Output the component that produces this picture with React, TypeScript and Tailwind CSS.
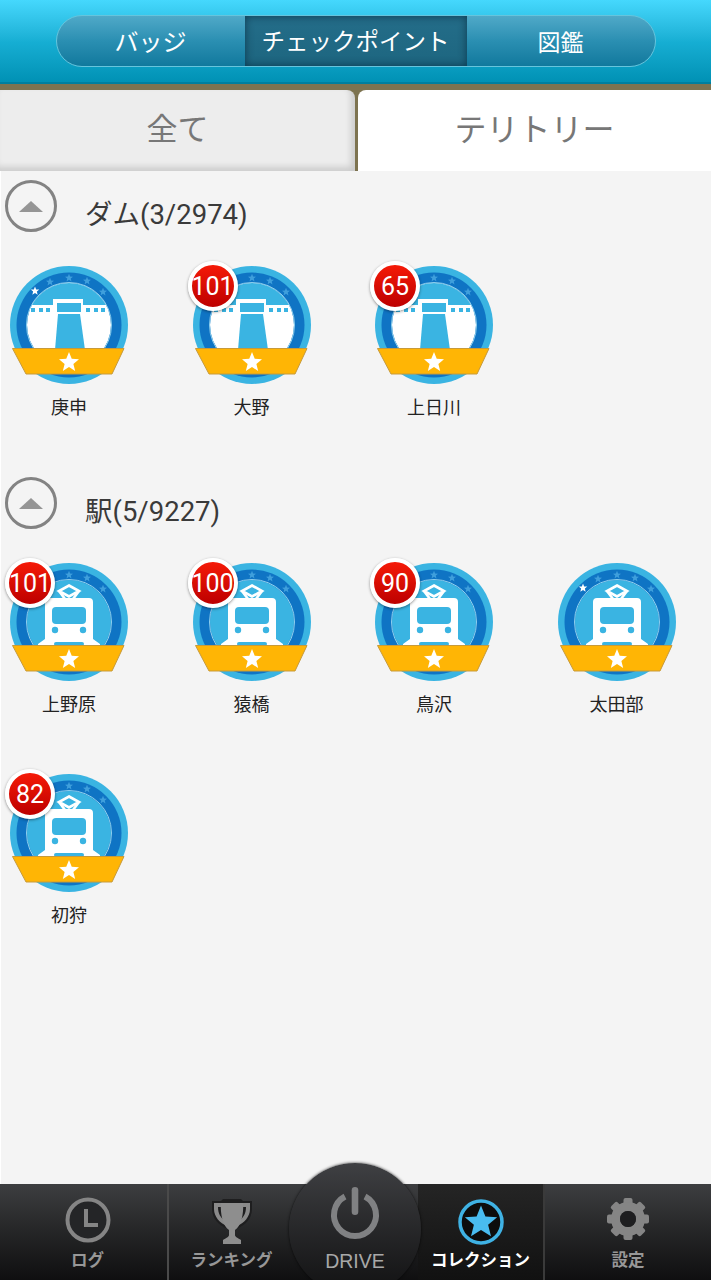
const JP = "font-['Roboto','Noto_Sans_CJK_JP',sans-serif]";

const SECTIONS = [
  {
    title: "ダム(3/2974)",
    kind: "dam",
    items: [
      { name: "庚申" },
      { name: "大野", count: 101 },
      { name: "上日川", count: 65 },
    ],
  },
  {
    title: "駅(5/9227)",
    kind: "train",
    items: [
      { name: "上野原", count: 101 },
      { name: "猿橋", count: 100 },
      { name: "鳥沢", count: 90 },
      { name: "太田部" },
      { name: "初狩", count: 82 },
    ],
  },
];

function starPoints(cx: number, cy: number, r: number) {
  const pts: string[] = [];
  for (let i = 0; i < 10; i++) {
    const rad = i % 2 === 0 ? r : r * 0.44;
    const a = (Math.PI / 5) * i - Math.PI / 2;
    pts.push(`${(cx + rad * Math.cos(a)).toFixed(2)},${(cy + rad * Math.sin(a)).toFixed(2)}`);
  }
  return pts.join(" ");
}

function DamArt() {
  return (
    <g>
      <rect x="17" y="17" width="84" height="84" fill="#fff" />
      <rect x="17" y="17" width="84" height="22" fill="#3ab4e2" />
      <rect x="17" y="39" width="84" height="9" fill="#fff" />
      <rect x="43" y="33" width="30" height="15" fill="#fff" />
      <rect x="47" y="37" width="24" height="9" fill="#3ab4e2" />
      <rect x="21" y="42" width="4" height="4" fill="#3ab4e2" />
      <rect x="29" y="42" width="4" height="4" fill="#3ab4e2" />
      <rect x="36" y="42" width="4" height="4" fill="#3ab4e2" />
      <rect x="76" y="42" width="4" height="4" fill="#3ab4e2" />
      <rect x="84" y="42" width="4" height="4" fill="#3ab4e2" />
      <rect x="91" y="42" width="4" height="4" fill="#3ab4e2" />
      <path d="M48 48 H70 L75 84 H45 Z" fill="#3ab4e2" />
    </g>
  );
}

function TrainArt() {
  return (
    <g>
      <rect x="17" y="17" width="84" height="84" fill="#3ab4e2" />
      <path d="M59 22.500 L69 28 L59 33.500 L49 28 Z" fill="none" stroke="#fff" strokeWidth="2.6" />
      <path d="M49 28 L55 36 M69 28 L63 36" stroke="#fff" strokeWidth="2.6" />
      <path d="M35 39 Q35 35 39 35 H79 Q83 35 83 39 V76 L90 81 V86 H28 V81 L35 76 Z" fill="#fff" />
      <rect x="42" y="44" width="34" height="17" rx="4" fill="#3ab4e2" />
      <circle cx="45" cy="67" r="3.200" fill="#3ab4e2" />
      <circle cx="73" cy="67" r="3.200" fill="#3ab4e2" />
      <rect x="44" y="79" width="30" height="4" rx="2" fill="#3ab4e2" />
    </g>
  );
}

function Medal({ kind }: { kind: string }) {
  const ringStars = [
    [40, 16],
    [59, 12],
    [77, 15],
    [93, 26],
  ];
  return (
    <svg width="118" height="118" viewBox="0 0 118 118" className="block">
      <defs>
        <clipPath id={`inner-${kind}`}>
          <circle cx="59" cy="59" r="42" />
        </clipPath>
      </defs>
      <circle cx="59" cy="59" r="59" fill="#3ab4e2" />
      <circle cx="59" cy="59" r="52.500" fill="#0f74c4" />
      <g clipPath={`url(#inner-${kind})`}>{kind === "dam" ? <DamArt /> : <TrainArt />}</g>
      <circle cx="59" cy="59" r="42.500" fill="none" stroke="#8fd0ee" strokeWidth="1" />
      <polygon points={starPoints(25, 25, 4.5)} fill="#fff" />
      {ringStars.map(([x, y]) => (
        <polygon key={x} points={starPoints(x, y, 4.2)} fill="#3f9fdc" />
      ))}
      <polygon points="2.500,82.500 114,82.500 102,108 16,108" fill="#ffb505" stroke="#c79a3a" strokeWidth="1" />
      <polygon points={starPoints(59, 96.5, 10.5)} fill="#fff" />
    </svg>
  );
}

function SectionHeader({ title }: { title: string }) {
  return (
    <div className="flex h-[86px] items-start">
      <div className="ml-[4px] flex h-[52px] w-[52px] items-center justify-center rounded-full border-[3px] border-[#838383] bg-[#f4f4f4]">
        <div className="h-0 w-0 border-x-[12px] border-b-[11px] border-x-transparent border-b-[#959595]" />
      </div>
      <div className={`${JP} ml-[28px] mt-[15px] text-[27.500px] leading-[40px] text-[#3a3a3a]`}>{title}</div>
    </div>
  );
}

function Checkpoint({ item, kind }: { item: { name: string; count?: number }; kind: string }) {
  return (
    <div className="h-[211px] w-[118px]">
      <div className="relative">
        <Medal kind={kind} />
        {item.count !== undefined && (
          <div className="absolute -left-[5px] -top-[5px] flex h-[50px] w-[50px] items-center justify-center rounded-full border-[4px] border-white bg-gradient-to-b from-[#f51a08] to-[#bd0000] shadow-[0_1px_3px_rgba(0,0,0,0.45)]">
            <span className={`${JP} text-[25px] leading-none text-white`}>{item.count}</span>
          </div>
        )}
      </div>
      <div className={`${JP} mt-[12px] whitespace-nowrap text-center text-[18px] leading-[24px] text-[#222]`}>{item.name}</div>
    </div>
  );
}

function ClockIcon() {
  return (
    <svg width="46" height="46" viewBox="0 0 46 46">
      <circle cx="23" cy="23" r="20.500" fill="#242527" stroke="#858585" strokeWidth="4" />
      <path d="M21 12 V28 H33" fill="none" stroke="#858585" strokeWidth="4" />
    </svg>
  );
}

function TrophyIcon() {
  return (
    <svg width="42" height="46" viewBox="0 0 42 46" className="-mb-[2px]">
      <path d="M1 2 H10 L12 0 H30 L32 2 H41 V10 C41 20 33 27 27 29 L24 31 H18 L15 29 C9 27 1 20 1 10 Z" fill="#1e1e1f" />
      <path d="M3 4 H11 V8 H7 C7 15 10 19 14 22 L16 27 C9 24 3 18 3 10 Z" fill="#8a8a8a" />
      <path d="M39 4 H31 V8 H35 C35 15 32 19 28 22 L26 27 C33 24 39 18 39 10 Z" fill="#8a8a8a" />
      <path d="M10 4 H32 C33 15 30 27 24 31 V36 C24 38 27 39 30 41 V45 H12 V41 C15 39 18 38 18 36 V31 C12 27 9 15 10 4 Z" fill="#8e8e8e" />
    </svg>
  );
}

function PowerIcon() {
  return (
    <svg width="52" height="54" viewBox="0 0 52 54">
      <path d="M16 9.500 A21 21 0 1 0 36 9.500" fill="none" stroke="#808183" strokeWidth="6" />
      <rect x="22.700" y="0" width="6.600" height="28" rx="3.300" fill="#808183" />
    </svg>
  );
}

function StarIcon() {
  return (
    <svg width="46" height="46" viewBox="0 0 46 46" className="-mb-[2px]">
      <circle cx="23" cy="23" r="21" fill="#0d0d0d" stroke="#3fb2e4" strokeWidth="3.500" />
      <polygon points={starPoints(23, 23.5, 17)} fill="#49bcf0" />
    </svg>
  );
}

function GearIcon() {
  const teeth = [0, 45, 90, 135, 180, 225, 270, 315];
  return (
    <svg width="42" height="42" viewBox="0 0 42 42" className="mb-[3px]">
      {teeth.map((deg) => (
        <rect key={deg} x="16.500" y="0" width="9" height="10" rx="2" fill="#858585" transform={`rotate(${deg} 21 21)`} />
      ))}
      <circle cx="21" cy="21" r="12.500" fill="none" stroke="#858585" strokeWidth="9" />
      <circle cx="21" cy="21" r="8" fill="#1e1e20" />
    </svg>
  );
}

function NavItem({ icon, label, active, className }: { icon: React.ReactNode; label: string; active?: boolean; className: string }) {
  return (
    <div className={`flex h-full flex-col items-center ${className}`}>
      <div className="flex h-[60px] items-end pb-[1px]">{icon}</div>
      <div
        className={`${JP} mt-[5px] whitespace-nowrap text-[16.500px] font-bold leading-[24px] ${active ? "text-white" : "text-[#979797]"}`}
      >
        {label}
      </div>
    </div>
  );
}

export default function App() {
  return (
    <div className="flex h-[1280px] w-[711px] flex-col overflow-hidden bg-[#f4f4f4]">
      {/* Top segmented bar */}
      <div className="flex h-[84px] shrink-0 items-start justify-center bg-gradient-to-b from-[#45d8fd] via-[#16aed3] to-[#0090b3] pt-[15px] shadow-[inset_0_-2px_0_#007f9f]">
        <div className="flex h-[52px] w-[600px] overflow-hidden rounded-full border border-[#66c4dc] bg-gradient-to-b from-[#4fa9c8] via-[#2a8fb2] to-[#10799d]">
          <div className="flex w-[188px] items-center justify-center font-['Noto_Sans_CJK_JP',sans-serif] text-[24px] text-white">バッジ</div>
          <div className="flex w-[222px] items-center justify-center bg-gradient-to-b from-[#246d89] to-[#1d6680] font-['Noto_Sans_CJK_JP',sans-serif] text-[23.500px] text-white shadow-[inset_0_0_8px_rgba(0,30,50,0.65)]">
            チェックポイント
          </div>
          <div className="flex flex-1 items-center justify-center font-['Noto_Sans_CJK_JP',sans-serif] text-[23px] text-white">図鑑</div>
        </div>
      </div>

      {/* Tabs */}
      <div className="flex h-[87px] shrink-0 bg-[#7d7350] pt-[6px]">
        <div className="flex w-[355px] items-center justify-center rounded-tr-[8px] bg-[#ededed] pb-[7px] font-['Noto_Sans_CJK_JP',sans-serif] text-[31px] text-[#777] shadow-[inset_-4px_-4px_6px_rgba(0,0,0,0.14)]">
          全て
        </div>
        <div className="ml-[3px] flex flex-1 items-center justify-center rounded-tl-[8px] bg-white pb-[7px] font-['Noto_Sans_CJK_JP',sans-serif] text-[32px] text-[#777]">
          テリトリー
        </div>
      </div>

      {/* Checkpoint list */}
      <div className="min-h-0 flex-1 border-l border-white pt-[9px]">
        {SECTIONS.map((section) => (
          <div key={section.title}>
            <SectionHeader title={section.title} />
            <div className="grid grid-cols-[repeat(4,182.500px)] pl-[9px]">
              {section.items.map((item) => (
                <Checkpoint key={item.name} item={item} kind={section.kind} />
              ))}
            </div>
          </div>
        ))}
      </div>

      {/* Bottom nav */}
      <div className="relative flex h-[96px] shrink-0 bg-gradient-to-b from-[#3d3e40] to-[#0f0f10]">
        <NavItem icon={<ClockIcon />} label="ログ" className="w-[169px] border-r-2 border-[#4a4a4a] pl-[8px]" />
        <NavItem icon={<TrophyIcon />} label="ランキング" className="w-[125px]" />
        <div className="w-[124px]" />
        <NavItem
          icon={<StarIcon />}
          label="コレクション"
          active
          className="w-[127px] border-r-2 border-[#3a3a3a] bg-gradient-to-b from-[#252525] to-[#111]"
        />
        <NavItem icon={<GearIcon />} label="設定" className="flex-1" />

        {/* Drive button sits over the bar */}
        <div className="absolute left-[289px] top-[-21px] flex h-[132px] w-[132px] flex-col items-center rounded-full bg-gradient-to-b from-[#3f4043] to-[#111112] pt-[24px] shadow-[0_0_3px_rgba(0,0,0,0.8)]">
          <PowerIcon />
          <div className="mt-[8px] font-['Liberation_Sans',sans-serif] text-[19.500px] leading-[24px] text-[#a8a8a8]">DRIVE</div>
        </div>
      </div>
    </div>
  );
}
